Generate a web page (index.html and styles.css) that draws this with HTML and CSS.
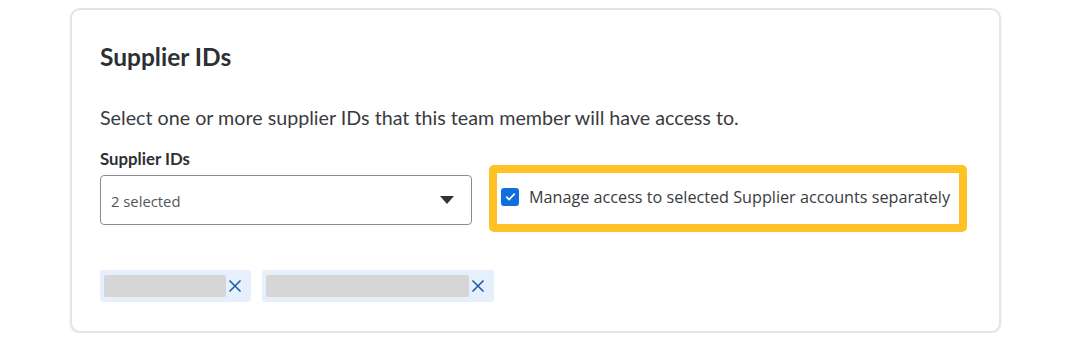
FILE: index.html
```html
<!DOCTYPE html>
<html lang="en">
<head>
    <meta charset="UTF-8">
    <title>Supplier IDs</title>
    <link rel="stylesheet" href="styles.css">
</head>
<body>
    <div class="card">
        <h2 class="card-title">Supplier IDs</h2>
        <p class="card-desc">Select one or more supplier IDs that this team member will have access to.</p>

        <label class="field-label" for="supplierSelect">Supplier IDs</label>
        <div class="field-row">
            <div class="select" id="supplierSelect">
                <span class="select-value">2 selected</span>
                <span class="select-caret"></span>
            </div>
            <div class="highlight">
                <label class="check">
                    <span class="check-box">
                        <svg viewBox="0 0 16 16"><path d="M3.5 8.2l3 3 6-6.2"/></svg>
                    </span>
                    Manage access to selected Supplier accounts separately
                </label>
            </div>
        </div>

        <div class="chips">
            <div class="chip">
                <span class="chip-text" style="width: 122px"></span>
                <svg class="chip-x" viewBox="0 0 14 14"><path d="M1.5 1.5l11 11M12.5 1.5l-11 11"/></svg>
            </div>
            <div class="chip">
                <span class="chip-text" style="width: 203px"></span>
                <svg class="chip-x" viewBox="0 0 14 14"><path d="M1.5 1.5l11 11M12.5 1.5l-11 11"/></svg>
            </div>
        </div>
    </div>
</body>
</html>
```

FILE: styles.css
```css
* {
    margin: 0;
    padding: 0;
    box-sizing: border-box;
}

body {
    font-family: Lato, "Open Sans", sans-serif;
    background: #fff;
    color: #2e2f32;
    padding: 8px 0 0 70px;
}

.card {
    width: 931px;
    height: 325px;
    border: 2px solid #e3e4e5;
    border-radius: 10px;
    box-shadow: 0 1px 2px rgba(0,0,0,0.08);
    padding: 33px 28px 0 28px;
}

.card-title {
    font-size: 24.5px;
    font-weight: 700;
    line-height: 28px;
    color: #2e2f32;
}

.card-desc {
    font-size: 19.7px;
    line-height: 26px;
    margin-top: 34px;
    color: #3a3b3e;
}

.field-label {
    display: block;
    font-size: 16.8px;
    font-weight: 700;
    line-height: 20px;
    margin-top: 18px;
}

.field-row {
    display: flex;
    align-items: flex-start;
    margin-top: -4px;
}

.select {
    width: 372px;
    height: 50px;
    margin-top: 10px;
    border: 1px solid #8c8d90;
    border-radius: 4px;
    display: flex;
    align-items: center;
    justify-content: space-between;
    padding: 0 17px 0 10px;
}

.select-value {
    font-family: "Open Sans", sans-serif;
    font-size: 14.8px;
    color: #55565a;
    margin-top: 2px;
}

.select-caret {
    width: 0;
    height: 0;
    border-left: 7px solid transparent;
    border-right: 7px solid transparent;
    border-top: 8px solid #333;
}

.highlight {
    margin-left: 17px;
    width: 478px;
    height: 67px;
    border: 8px solid #ffc124;
    border-radius: 5px;
    display: flex;
    align-items: center;
    padding: 0 0 4px 4px;
}

.check {
    display: flex;
    align-items: center;
    font-family: "Open Sans", sans-serif;
    font-size: 16.2px;
    color: #3a3b3e;
}

.check-box {
    width: 18px;
    height: 18px;
    border-radius: 3px;
    background: #0f6fde;
    margin-right: 10px;
    display: inline-flex;
    align-items: center;
    justify-content: center;
}

.check-box svg {
    width: 15px;
    height: 15px;
    fill: none;
    stroke: #fff;
    stroke-width: 1.8;
}

.chips {
    display: flex;
    gap: 11px;
    margin-top: 38px;
}

.chip {
    height: 32px;
    background: #e6f0fc;
    border-radius: 3px;
    display: flex;
    align-items: center;
    padding: 0 9px 0 4px;
}

.chip-text {
    height: 22px;
    background: #d6d6d6;
    border-radius: 2px;
    margin-right: 2px;
}

.chip-x {
    width: 14px;
    height: 14px;
    fill: none;
    stroke: #1f5da8;
    stroke-width: 1.6;
}
```
